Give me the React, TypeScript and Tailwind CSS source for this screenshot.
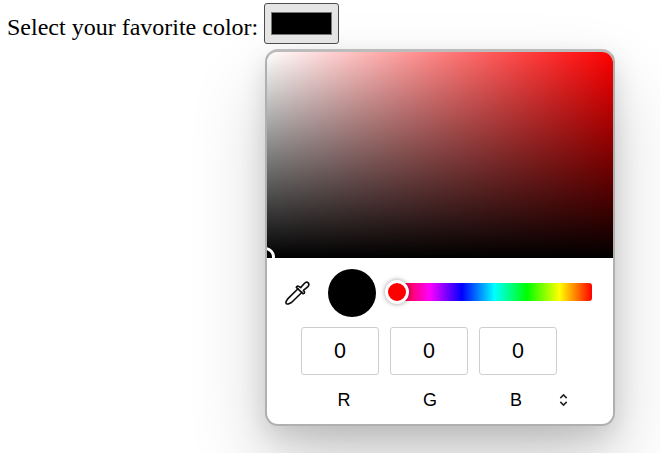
const channels = [
  { name: "R", pad: "pl-[8px]" },
  { name: "G", pad: "pl-[2px]" },
  { name: "B", pad: "pr-[4px]" },
];

function Eyedropper() {
  return (
    <svg className="ml-[17px] h-[28px] w-[28px] shrink-0" viewBox="0 0 28 28" fill="none" stroke="#0a0a0a" strokeWidth="1.6" strokeLinejoin="round" strokeLinecap="round">
      <path d="M14 9.8 3.7 19.9Q2 22 1.9 23.5 2 25.5 4.3 24.9L7.5 23.5 18 13.2" />
      <path d="M12.3 8.4Q13 6.8 14.4 7.2L16.6 8.6 20.3 4.5Q22.5 2.3 24.2 3.8 25.7 5.4 24 7.6L19.4 11.3 20.6 13.1Q20.7 14.6 19.2 14.8Z" />
    </svg>
  );
}

function ColorPicker() {
  return (
    <div className="ml-[265px] mt-[5px] h-[377px] w-[350px] overflow-visible rounded-[13px] border-2 border-t-[3px] border-[#b0b0b0] border-t-[#bcbcbc] bg-white shadow-[0_38px_76px_rgba(0,0,0,0.19),0_10px_26px_rgba(0,0,0,0.13)]">
      <div className="relative h-[206px] overflow-hidden rounded-t-[11px] bg-[linear-gradient(to_top,#000,transparent),linear-gradient(to_right,#fff,#f00)]">
        <div className="absolute -left-[12px] top-[195px] size-[20px] rounded-full border-[3px] border-white bg-black" />
      </div>
      <div className="flex h-[69px] items-center">
        <Eyedropper />
        <div className="ml-[16px] size-[48px] shrink-0 rounded-full bg-black" />
        <div className="relative mb-[2px] ml-[21px] h-[18px] w-[195px] rounded-[3px] bg-[linear-gradient(to_right,#f00,#f0f_16.67%,#00f_33.33%,#0ff_50%,#0f0_66.67%,#ff0_83.33%,#f00)]">
          <div className="absolute -left-[12px] -top-[3px] size-[24px] rounded-full border-[3px] border-white bg-[#f00] shadow-[0_0_5px_rgba(0,0,0,0.4)]" />
        </div>
      </div>
      <div className="ml-[34px] flex gap-[11px]">
        {channels.map((c) => (
          <div key={c.name} className="w-[78px] text-center">
            <div className="flex h-[48px] items-center justify-center rounded-[3px] border border-[#cecece] text-[21.5px] text-black">0</div>
            <div className={`mt-[14px] text-[18px] leading-[22px] ${c.pad}`}>{c.name}</div>
          </div>
        ))}
        <svg className="-ml-[10px] mt-[66px] h-[14px] w-[10px]" viewBox="0 0 10 14" fill="none" stroke="#222" strokeWidth="1.5">
          <path d="M2.3 5.1 5.5 1.9 8.7 5.1M2.3 8.9 5.5 12.1 8.7 8.9" />
        </svg>
      </div>
    </div>
  );
}

export default function App() {
  return (
    <main className="h-[453px] w-[660px] overflow-hidden bg-white pt-[3px] font-['Liberation_Sans',Arial,sans-serif] text-black">
      <div className="flex h-[41px] items-center">
        <label className="ml-[7px] w-[257px] whitespace-nowrap pt-[6px] font-['Liberation_Serif','Times_New_Roman',serif] text-[24px] leading-[28px]">
          Select your favorite color:
        </label>
        <button className="h-[41px] w-[75px] rounded-[3px] border border-[#4d4d4d] bg-[#e5e5e5] px-[6px] py-[8px]">
          <span className="block h-[23px] w-[61px] border border-[#777] bg-black" />
        </button>
      </div>
      <ColorPicker />
    </main>
  );
}
